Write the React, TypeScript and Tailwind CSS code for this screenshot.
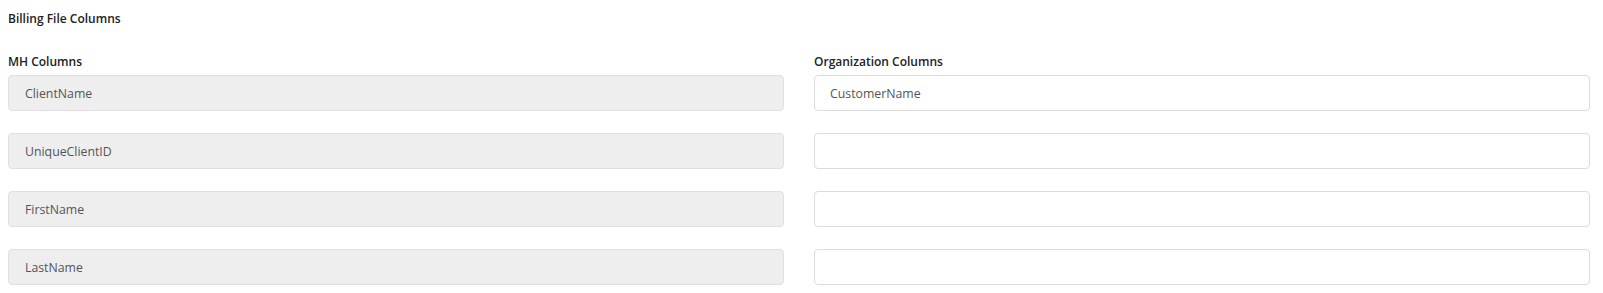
import React from "react";

const rows = [
  { mh: "ClientName", org: "CustomerName" },
  { mh: "UniqueClientID", org: "" },
  { mh: "FirstName", org: "" },
  { mh: "LastName", org: "" },
];

export default function App() {
  return (
    <div
      className="min-h-screen bg-white text-[#333] pl-[8px] pr-[13px] pt-[10px]"
      style={{ fontFamily: '"Open Sans", "Noto Sans", sans-serif' }}
    >
      {/* Header */}
      <h2 className="text-[12px] font-semibold leading-[18px] text-[#222]">Billing File Columns</h2>

      <div className="grid grid-cols-2 gap-x-[30px] mt-[25px]">
        <div className="text-[12px] font-semibold leading-[18px] text-[#222]">MH Columns</div>
        <div className="text-[12px] font-semibold leading-[18px] text-[#222]">Organization Columns</div>
      </div>

      <div className="grid grid-cols-2 gap-x-[30px] gap-y-[22px] mt-[4px]">
        {rows.map((row) => (
          <React.Fragment key={row.mh}>
            <input
              readOnly
              value={row.mh}
              className="h-[36px] w-full rounded-[4px] border border-[#e0e0e0] bg-[#eeeeee] px-[16px] text-[12.3px] text-[#555] outline-none"
            />
            <input
              defaultValue={row.org}
              className="h-[36px] w-full rounded-[4px] border border-[#dcdcdc] bg-white px-[15px] text-[12.3px] text-[#555] outline-none"
            />
          </React.Fragment>
        ))}
      </div>
    </div>
  );
}
